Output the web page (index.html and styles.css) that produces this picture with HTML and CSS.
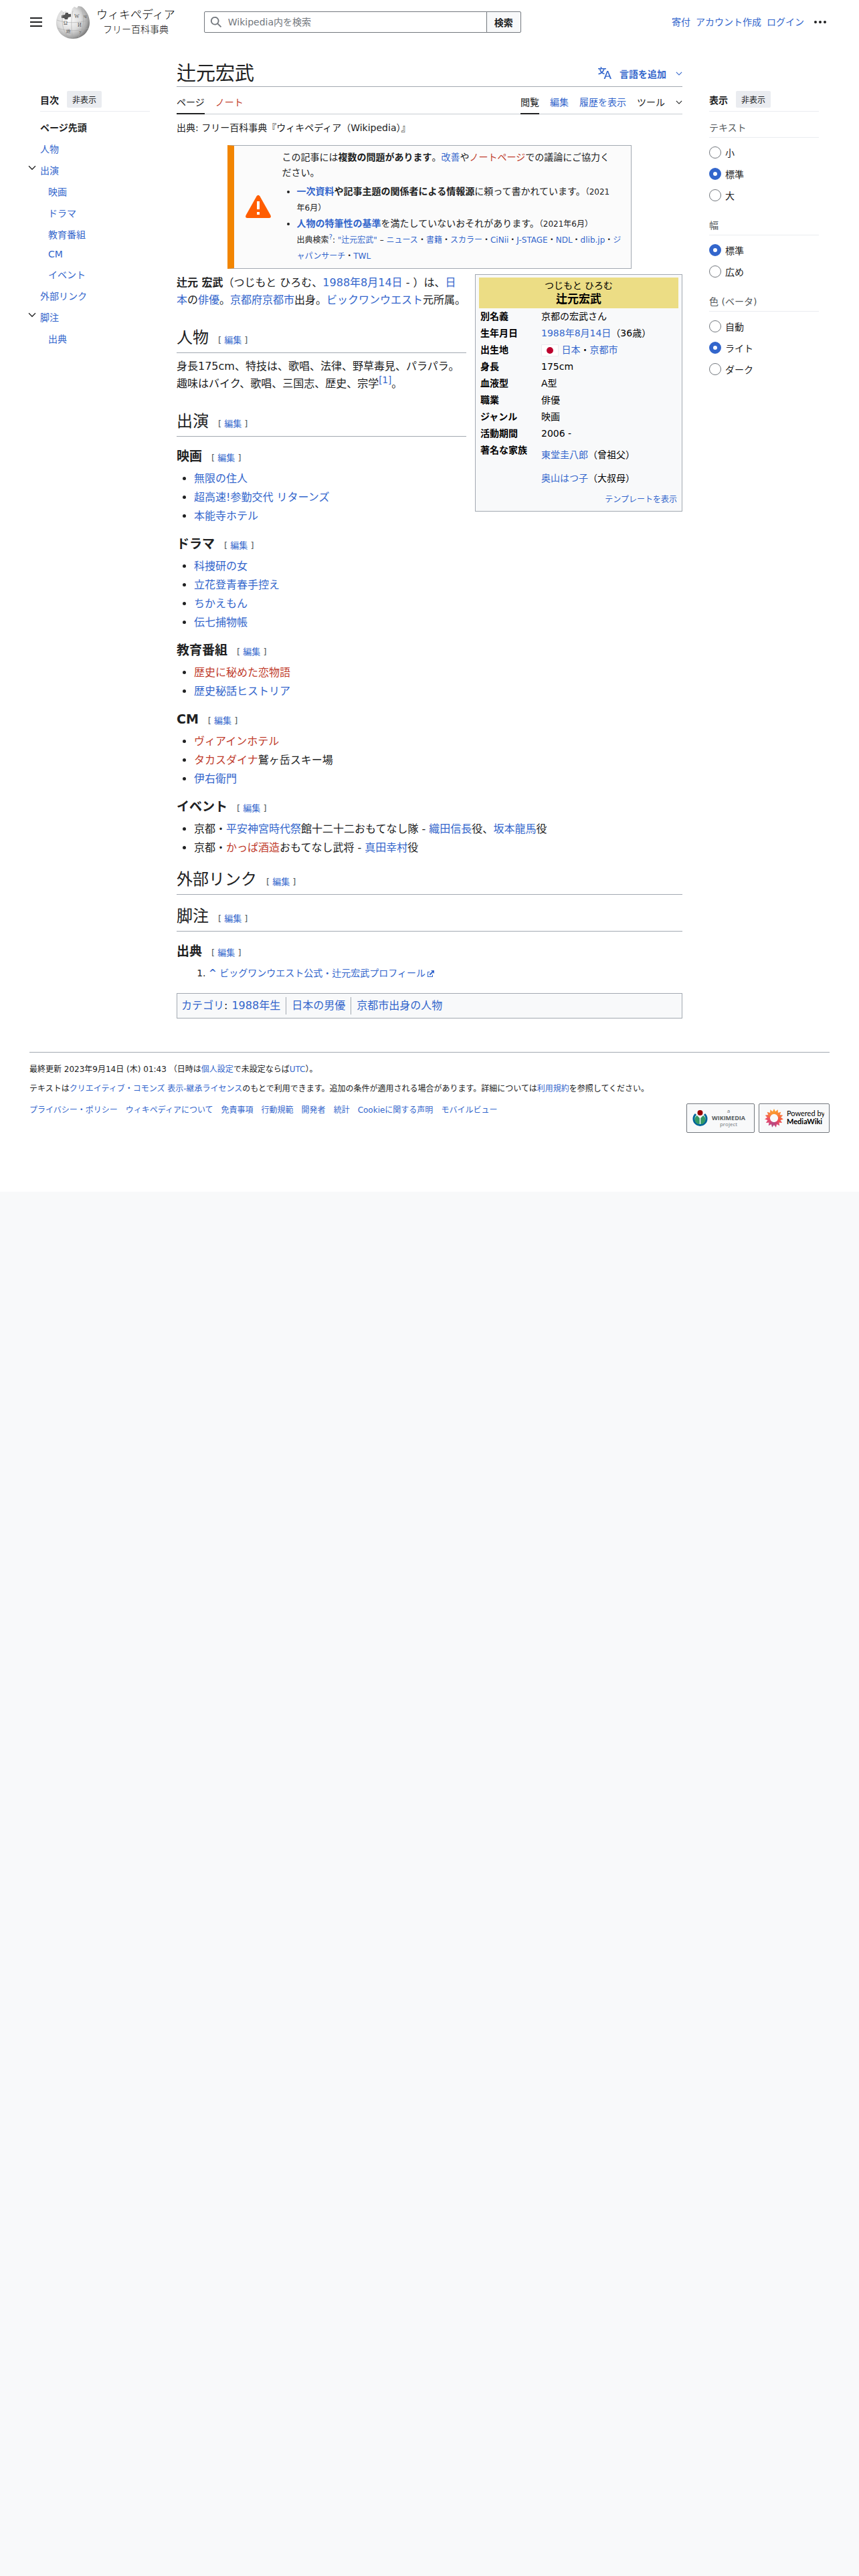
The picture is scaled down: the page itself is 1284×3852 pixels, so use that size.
FILE: index.html
```
<!DOCTYPE html>
<html lang="ja">
<head>
  <meta charset="UTF-8">
  <meta name="viewport" content="width=device-width, initial-scale=1">
  <title>辻元宏武 - Wikipedia</title>
  <link rel="stylesheet" href="styles.css">
</head>
<body>
  <div class="page">
    <header class="header">
      <button type="button" class="menu-button" aria-label="メインメニュー">
        <svg width="20" height="20" viewBox="0 0 20 20"><path d="M1 3h18v2H1zM1 9h18v2H1zM1 15h18v2H1z" fill="#202122"/></svg>
      </button>
      <a href="#" class="logo">
        <svg class="globe" width="50" height="50" viewBox="0 0 50 50">
          <defs>
            <radialGradient id="ball" cx="0.38" cy="0.4" r="0.65">
              <stop offset="0" stop-color="#fff"/>
              <stop offset="0.55" stop-color="#dcdcdc"/>
              <stop offset="0.85" stop-color="#a8a8a8"/>
              <stop offset="1" stop-color="#777"/>
            </radialGradient>
          </defs>
          <path d="M8 7C3 12 0 19 0 26c0 13 11 24 25 24s25-11 25-24C50 16 45 7 38 2l-5-1-2 3-4-2-3 3-2 6-5 2-2-5-4 2z" fill="url(#ball)"/>
          <path d="M8 15l5-1 1-3 4 0v2l4 0 0 4-4 1-1 3-4 0-1-2-4 0z" fill="#555"/>
          <g fill="none" stroke="#aaa" stroke-width="0.6">
            <path d="M25 8c-3 14-3 28 0 42M11 10c-4 12-2 26 6 37M38 5c5 14 3 30-5 43"/>
            <path d="M1 22c14 5 32 5 48 0M2 34c14 5 32 5 46 0"/>
          </g>
          <g fill="#555" font-size="8" font-family="Liberation Serif, serif">
            <text x="27" y="19">W</text><text x="11" y="29">Ω</text><text x="32" y="32">И</text>
            <text x="41" y="19" font-size="7">Ч</text><text x="15" y="41" font-size="7">維</text>
            <text x="34" y="43" font-size="7">7</text>
          </g>
        </svg>
        <span class="wordmark">
          <span class="wordmark-name">ウィキペディア</span>
          <span class="wordmark-tagline">フリー百科事典</span>
        </span>
      </a>
      <form class="search">
        <svg width="18" height="18" viewBox="0 0 20 20"><path d="M12.2 13.6a7 7 0 1 1 1.4-1.4l5.4 5.4-1.4 1.4zM3 8a5 5 0 1 0 10 0A5 5 0 0 0 3 8" fill="#72777d"/></svg>
        <input type="search" class="search-input" placeholder="Wikipedia内を検索" aria-label="Wikipedia内を検索">
        <button type="submit" class="search-button">検索</button>
      </form>
      <nav class="user-links">
        <a href="#">寄付</a>
        <a href="#">アカウント作成</a>
        <a href="#">ログイン</a>
        <button type="button" class="more-button" aria-label="個人用ツール">
          <svg width="20" height="20" viewBox="0 0 20 20" fill="#202122"><circle cx="3" cy="10" r="2"/><circle cx="10" cy="10" r="2"/><circle cx="17" cy="10" r="2"/></svg>
        </button>
      </nav>
    </header>

    <div class="columns">
      <nav class="toc side">
        <div class="side-header">
          <h2>目次</h2>
          <button type="button">非表示</button>
        </div>
        <ul>
          <li><a href="#" class="toc-top">ページ先頭</a></li>
          <li><a href="#">人物</a></li>
          <li class="toc-parent">
            <svg class="toc-arrow" width="12" height="12" viewBox="0 0 20 20"><path d="m17.5 4.75-7.5 7.5-7.5-7.5L1 6.25l9 9 9-9z" fill="#202122"/></svg>
            <a href="#">出演</a>
            <ul>
              <li><a href="#">映画</a></li>
              <li><a href="#">ドラマ</a></li>
              <li><a href="#">教育番組</a></li>
              <li><a href="#">CM</a></li>
              <li><a href="#">イベント</a></li>
            </ul>
          </li>
          <li><a href="#">外部リンク</a></li>
          <li class="toc-parent">
            <svg class="toc-arrow" width="12" height="12" viewBox="0 0 20 20"><path d="m17.5 4.75-7.5 7.5-7.5-7.5L1 6.25l9 9 9-9z" fill="#202122"/></svg>
            <a href="#">脚注</a>
            <ul>
              <li><a href="#">出典</a></li>
            </ul>
          </li>
        </ul>
      </nav>

      <main class="content">
        <div class="title-bar">
          <h1>辻元宏武</h1>
          <button type="button" class="lang-button">
            <svg width="20" height="20" viewBox="0 0 20 20" fill="#36c"><path d="M20 18h-1.4a1 1 0 0 1-.6-.2.9.9 0 0 1-.3-.5l-.9-2.5h-5l-.9 2.5a1 1 0 0 1-.3.4 1 1 0 0 1-.6.3H8.6l4.700-12h1.900zm-3.600-4.500L14.700 8.900a11 11 0 0 1-.4-1.300l-.2.700-.2.600-1.700 4.600zM5 0l.6 2H12v1.500H9.600C9 5.600 8 7.200 6.800 8.400c.8.600 1.800 1 3 1.400l-.6 1.500c-1.500-.5-2.700-1.100-3.700-1.900C4.300 10.300 2.700 11 .8 11.500L.2 10c1.700-.4 3-.9 4.100-1.700C3.200 7.200 2.500 5.700 2 3.500H0V2h4.200l-.8-2zm-1.400 3.500C4 5.200 4.700 6.400 5.600 7.300 6.700 6.300 7.500 5 8 3.500z"/></svg>
            <span>言語を追加</span>
            <svg width="10" height="10" viewBox="0 0 20 20"><path d="m17.5 4.75-7.5 7.5-7.5-7.5L1 6.25l9 9 9-9z" fill="#36c"/></svg>
          </button>
        </div>
        <div class="toolbar">
          <nav class="tabs">
            <a href="#" class="selected">ページ</a>
            <a href="#" class="new">ノート</a>
          </nav>
          <nav class="tabs">
            <a href="#" class="selected">閲覧</a>
            <a href="#">編集</a>
            <a href="#">履歴を表示</a>
            <button type="button" class="tools-button">ツール
              <svg width="10" height="10" viewBox="0 0 20 20"><path d="m17.5 4.75-7.5 7.5-7.5-7.5L1 6.25l9 9 9-9z" fill="#202122"/></svg>
            </button>
          </nav>
        </div>
        <div class="site-sub">出典: フリー百科事典『ウィキペディア（Wikipedia）』</div>

        <div class="ambox">
          <svg class="ambox-icon" width="40" height="40" viewBox="0 0 40 40">
            <path d="M17.5 4.500Q20 1 22.500 4.500L38.500 33Q40 37 36 37H4Q0 37 1.500 33z" fill="#ff5d00"/>
            <path d="M18 12h4v12h-4zM18 28h4v4h-4z" fill="#fff"/>
          </svg>
          <div class="ambox-text">
            <p>この記事には<b>複数の問題があります</b>。<a href="#">改善</a>や<a href="#" class="new">ノートページ</a>での議論にご協力く<br>ださい。</p>
            <ul>
              <li><b><a href="#">一次資料</a>や記事主題の関係者による情報源</b>に頼って書かれています。<small>（2021<br>年6月）</small></li>
              <li><b><a href="#">人物の特筆性の基準</a></b>を満たしていないおそれがあります。<small>（2021年6月）</small><br>
                <small>出典検索<sup><a href="#">?</a></sup>: <a href="#">"辻元宏武"</a> – <a href="#">ニュース</a>・<a href="#">書籍</a>・<a href="#">スカラー</a>・<a href="#">CiNii</a>・<a href="#">J-STAGE</a>・<a href="#">NDL</a>・<a href="#">dlib.jp</a>・<a href="#">ジ<br>ャパンサーチ</a>・<a href="#">TWL</a></small></li>
            </ul>
          </div>
        </div>

        <table class="infobox">
          <tr><th colspan="2" class="infobox-title">つじもと ひろむ<br><span class="infobox-name">辻元宏武</span></th></tr>
          <tr><th>別名義</th><td>京都の宏武さん</td></tr>
          <tr><th>生年月日</th><td><a href="#">1988年8月14日</a>（36歳）</td></tr>
          <tr><th>出生地</th><td><svg class="flag" width="26" height="18" viewBox="0 0 26 18"><path d="M.5.5h25v17H.5z" fill="#fff" stroke="#eaecf0"/><circle cx="13" cy="9" r="5" fill="#bc002d"/></svg> <a href="#">日本</a>・<a href="#">京都市</a></td></tr>
          <tr><th>身長</th><td>175cm</td></tr>
          <tr><th>血液型</th><td>A型</td></tr>
          <tr><th>職業</th><td>俳優</td></tr>
          <tr><th>ジャンル</th><td>映画</td></tr>
          <tr><th>活動期間</th><td>2006 -</td></tr>
          <tr><th>著名な家族</th><td class="family"><p><a href="#">東堂圭八郎</a>（曾祖父）</p><p><a href="#">奥山はつ子</a>（大叔母）</p></td></tr>
          <tr><td colspan="2" class="infobox-footer"><a href="#">テンプレートを表示</a></td></tr>
        </table>

        <p><b>辻元 宏武</b>（つじもと ひろむ、<a href="#">1988年8月14日</a> - ）は、<a href="#">日本</a>の<a href="#">俳優</a>。<a href="#">京都府京都市</a>出身。<a href="#">ビックワンウエスト</a>元所属。</p>

        <div class="heading heading2"><h2>人物</h2><span class="edit">[ <a href="#">編集</a> ]</span></div>
        <p>身長175cm、特技は、歌唱、法律、野草毒見、パラパラ。<br>趣味はバイク、歌唱、三国志、歴史、宗学<sup><a href="#">[1]</a></sup>。</p>

        <div class="heading heading2"><h2>出演</h2><span class="edit">[ <a href="#">編集</a> ]</span></div>
        <div class="heading heading3"><h3>映画</h3><span class="edit">[ <a href="#">編集</a> ]</span></div>
        <ul class="list">
          <li><a href="#">無限の住人</a></li>
          <li><a href="#">超高速!参勤交代 リターンズ</a></li>
          <li><a href="#">本能寺ホテル</a></li>
        </ul>
        <div class="heading heading3"><h3>ドラマ</h3><span class="edit">[ <a href="#">編集</a> ]</span></div>
        <ul class="list">
          <li><a href="#">科捜研の女</a></li>
          <li><a href="#">立花登青春手控え</a></li>
          <li><a href="#">ちかえもん</a></li>
          <li><a href="#">伝七捕物帳</a></li>
        </ul>
        <div class="heading heading3"><h3>教育番組</h3><span class="edit">[ <a href="#">編集</a> ]</span></div>
        <ul class="list">
          <li><a href="#" class="new">歴史に秘めた恋物語</a></li>
          <li><a href="#">歴史秘話ヒストリア</a></li>
        </ul>
        <div class="heading heading3"><h3>CM</h3><span class="edit">[ <a href="#">編集</a> ]</span></div>
        <ul class="list">
          <li><a href="#" class="new">ヴィアインホテル</a></li>
          <li><a href="#" class="new">タカスダイナ</a>鷲ヶ岳スキー場</li>
          <li><a href="#">伊右衛門</a></li>
        </ul>
        <div class="heading heading3"><h3>イベント</h3><span class="edit">[ <a href="#">編集</a> ]</span></div>
        <ul class="list">
          <li>京都・<a href="#">平安神宮時代祭</a>館十二十二おもてなし隊 - <a href="#">織田信長</a>役、<a href="#">坂本龍馬</a>役</li>
          <li>京都・<a href="#" class="new">かっぱ酒造</a>おもてなし武将 - <a href="#">真田幸村</a>役</li>
        </ul>

        <div class="heading heading2"><h2>外部リンク</h2><span class="edit">[ <a href="#">編集</a> ]</span></div>
        <div class="heading heading2"><h2>脚注</h2><span class="edit">[ <a href="#">編集</a> ]</span></div>
        <div class="heading heading3"><h3>出典</h3><span class="edit">[ <a href="#">編集</a> ]</span></div>
        <ol class="references">
          <li><b><a href="#">^</a></b> <a href="#">ビッグワンウエスト公式・辻元宏武プロフィール<svg class="external" width="12" height="12" viewBox="0 0 12 12"><path d="M6 1h5v5L9.2 4.200 5 8.400 3.600 7l4.200-4.200zM2 3h2.500v1H2v6h6V7.500h1V11H1V3z" fill="#36c"/></svg></a></li>
        </ol>

        <div class="categories">
          <span><a href="#">カテゴリ</a>:</span>
          <ul>
            <li><a href="#">1988年生</a></li>
            <li><a href="#">日本の男優</a></li>
            <li><a href="#">京都市出身の人物</a></li>
          </ul>
        </div>
      </main>

      <aside class="appearance side">
        <div class="side-header">
          <h2>表示</h2>
          <button type="button">非表示</button>
        </div>
        <fieldset>
          <legend>テキスト</legend>
          <label><input type="radio" name="text">小</label>
          <label><input type="radio" name="text" checked>標準</label>
          <label><input type="radio" name="text">大</label>
        </fieldset>
        <fieldset>
          <legend>幅</legend>
          <label><input type="radio" name="width" checked>標準</label>
          <label><input type="radio" name="width">広め</label>
        </fieldset>
        <fieldset>
          <legend>色 (ベータ)</legend>
          <label><input type="radio" name="color">自動</label>
          <label><input type="radio" name="color" checked>ライト</label>
          <label><input type="radio" name="color">ダーク</label>
        </fieldset>
      </aside>
    </div>

    <footer class="footer">
      <p>最終更新 2023年9月14日 (木) 01:43 （日時は<a href="#">個人設定</a>で未設定ならば<a href="#">UTC</a>）。</p>
      <p>テキストは<a href="#">クリエイティブ・コモンズ 表示-継承ライセンス</a>のもとで利用できます。追加の条件が適用される場合があります。詳細については<a href="#">利用規約</a>を参照してください。</p>
      <div class="footer-bottom">
        <ul class="footer-links">
          <li><a href="#">プライバシー・ポリシー</a></li>
          <li><a href="#">ウィキペディアについて</a></li>
          <li><a href="#">免責事項</a></li>
          <li><a href="#">行動規範</a></li>
          <li><a href="#">開発者</a></li>
          <li><a href="#">統計</a></li>
          <li><a href="#">Cookieに関する声明</a></li>
          <li><a href="#">モバイルビュー</a></li>
        </ul>
        <div class="badges">
          <a href="#" class="badge">
            <svg width="86" height="32" viewBox="0 0 86 32">
              <path d="M6 10a9.500 9.500 0 1 0 13 0" fill="none" stroke="#069" stroke-width="3"/>
              <path d="M8 12a7 7 0 0 0 3.800 13V16zM17 12a7 7 0 0 1-3.800 13V16z" fill="#396"/>
              <circle cx="12.500" cy="8" r="4" fill="#900"/>
              <g font-family="Open Sans, sans-serif" text-anchor="middle" fill="#72777d">
                <text x="55" y="8" font-size="8">a</text>
                <text x="55" y="19" font-size="9" font-weight="700" fill="#54595d">WIKIMEDIA</text>
                <text x="55" y="28" font-size="8">project</text>
              </g>
            </svg>
          </a>
          <a href="#" class="badge">
            <svg width="90" height="32" viewBox="0 0 90 32">
              <defs><path id="petal" d="M-3 -8L0 -14L3 -8L2 -6H-2z"/></defs>
              <g transform="translate(15 16)">
                <use href="#petal" fill="#f99d32"/>
                <use href="#petal" fill="#fa9132" transform="rotate(24)"/>
                <use href="#petal" fill="#fb8537" transform="rotate(48)"/>
                <use href="#petal" fill="#f9743c" transform="rotate(72)"/>
                <use href="#petal" fill="#f5623f" transform="rotate(96)"/>
                <use href="#petal" fill="#ef5350" transform="rotate(120)"/>
                <use href="#petal" fill="#e0486a" transform="rotate(144)"/>
                <use href="#petal" fill="#c94578" transform="rotate(168)"/>
                <use href="#petal" fill="#b44a80" transform="rotate(192)"/>
                <use href="#petal" fill="#c4487c" transform="rotate(216)"/>
                <use href="#petal" fill="#dd4770" transform="rotate(240)"/>
                <use href="#petal" fill="#ea5065" transform="rotate(264)"/>
                <use href="#petal" fill="#f16250" transform="rotate(288)"/>
                <use href="#petal" fill="#f67c40" transform="rotate(312)"/>
                <use href="#petal" fill="#fa9436" transform="rotate(336)"/>
              </g>
              <g font-family="Lato, sans-serif" fill="#000">
                <text x="34" y="13" font-size="11">Powered by</text>
                <text x="34" y="25" font-size="11" font-weight="700">MediaWiki</text>
              </g>
            </svg>
          </a>
        </div>
      </div>
    </footer>
  </div>
</body>
</html>
```
FILE: styles.css
```
* {
  margin: 0;
  padding: 0;
  box-sizing: border-box;
}

body {
  background-color: #f8f9fa;
  color: #202122;
  font-family: "DejaVu Sans", "Noto Sans CJK JP", sans-serif;
  font-size: 16px;
  line-height: 26px;
}

a {
  color: #36c;
  text-decoration: none;
}

a.new {
  color: #bf3c2c;
}

ul {
  list-style: none;
}

button {
  border: none;
  background: none;
  color: inherit;
  font-family: inherit;
  font-size: 14px;
  cursor: pointer;
}

sup {
  line-height: 1;
}

.page {
  background-color: #fff;
  padding: 0 44px 88px;
}

/* Header */
.header {
  display: flex;
  align-items: center;
  height: 66px;
}

.menu-button {
  display: flex;
  width: 20px;
  height: 20px;
}

.logo {
  display: flex;
  align-items: center;
  gap: 10px;
  margin-left: 20px;
  color: #000;
}

.wordmark {
  display: flex;
  flex-direction: column;
  align-items: center;
  font-weight: 300;
  line-height: 22px;
}

.wordmark-name {
  font-size: 17px;
}

.wordmark-tagline {
  font-size: 14px;
}

.search {
  display: flex;
  align-items: center;
  position: relative;
  flex: 0 1 474px;
  margin-left: 43px;
}

.search svg {
  position: absolute;
  left: 9px;
}

.search-input {
  flex: 1;
  height: 32px;
  min-width: 0;
  padding: 0 8px 0 35px;
  border: 1px solid #72777d;
  border-radius: 2px 0 0 2px;
  font-family: inherit;
  font-size: 14px;
}

.search-input::placeholder {
  color: #72777d;
}

.search-button {
  height: 32px;
  margin-left: -1px;
  padding: 0 11px;
  border: 1px solid #72777d;
  border-radius: 0 2px 2px 0;
  background-color: #f8f9fa;
  font-weight: bold;
}

.user-links {
  display: flex;
  align-items: center;
  gap: 8px;
  margin-left: auto;
  padding-right: 4px;
  font-size: 14px;
}

.more-button {
  display: flex;
  margin-left: 6px;
}

/* Three columns */
.columns {
  display: grid;
  grid-template-columns: 180px minmax(0, 1fr) 180px;
  gap: 40px;
  padding-top: 24px;
}

.side {
  padding-top: 46px;
  font-size: 14px;
  line-height: normal;
}

.side-header {
  display: flex;
  align-items: center;
  gap: 12px;
  padding-bottom: 5px;
  border-bottom: 1px solid #eaecf0;
}

.side-header h2 {
  font-size: 14px;
}

.side-header button {
  height: 25px;
  padding: 0 8px;
  border-radius: 2px;
  background-color: #eaecf0;
  font-size: 12px;
}

.toc {
  padding-left: 16px;
}

.toc > ul {
  padding-top: 7px;
}

.toc a {
  display: block;
  padding: 6px 0;
}

.toc .toc-top {
  color: #202122;
  font-weight: bold;
}

.toc li ul {
  padding-left: 12px;
}

.toc-parent {
  position: relative;
}

.toc-arrow {
  position: absolute;
  top: 7px;
  left: -18px;
}

.appearance {
  padding-right: 16px;
}

.appearance fieldset {
  border: none;
  padding-bottom: 5px;
}

.appearance legend {
  width: 100%;
  margin-bottom: 6px;
  padding: 13px 0 5px;
  border-bottom: 1px solid #eaecf0;
  color: #54595d;
}

.appearance label {
  display: flex;
  align-items: center;
  gap: 6px;
  height: 32px;
}

.appearance input {
  appearance: none;
  width: 18px;
  height: 18px;
  border: 1px solid #72777d;
  border-radius: 50%;
  background-color: #fff;
}

.appearance input:checked {
  border: 6px solid #36c;
}

/* Title and tabs */
.title-bar {
  display: flex;
  align-items: center;
  justify-content: space-between;
  height: 40px;
  border-bottom: 1px solid #a2a9b1;
}

h1 {
  font-size: 29px;
  font-weight: normal;
  line-height: 36px;
}

.lang-button {
  display: flex;
  align-items: center;
  color: #36c;
  font-weight: bold;
}

.lang-button span {
  margin: 0 14px 0 12px;
}

.toolbar {
  display: flex;
  justify-content: space-between;
  height: 41px;
  border-bottom: 1px solid #c8ccd1;
}

.tabs {
  display: flex;
  gap: 16px;
  font-size: 14px;
}

.tabs a,
.tabs button {
  height: 41px;
  padding-top: 10px;
  line-height: 26px;
}

.tabs .selected {
  border-bottom: 2px solid #202122;
  color: #202122;
}

.tools-button {
  display: flex;
  align-items: center;
  gap: 16px;
  padding-bottom: 6px;
}

.site-sub {
  padding-top: 9px;
  font-size: 14px;
  line-height: 22px;
}

/* Notice box */
.ambox {
  display: flex;
  align-items: center;
  width: 80%;
  margin: 15px auto 8px;
  padding: 6px 12px 7px 16px;
  border: 1px solid #a2a9b1;
  border-left: 10px solid #f28500;
  background-color: #fbfbfb;
  font-size: 14px;
  line-height: 23px;
}

.ambox-icon {
  flex: none;
  margin-right: 16px;
}

.ambox ul {
  list-style: disc;
  padding: 4px 0 0 22px;
  line-height: 24px;
}

.content .ambox p {
  padding: 0;
}

small {
  font-size: 12px;
  line-height: 1;
}

/* Infobox */
.infobox {
  float: right;
  width: 310px;
  margin: 0 0 14px 13px;
  padding: 4px 5px 4px;
  border: 1px solid #a2a9b1;
  border-spacing: 0;
  background-color: #f8f9fa;
  color: #000;
  font-size: 14px;
  line-height: 21px;
}

.infobox th,
.infobox td {
  padding: 2px;
  text-align: left;
  vertical-align: top;
}

.infobox th {
  width: 91px;
}

.infobox .infobox-title {
  background-color: #ecdd85;
  font-weight: normal;
  text-align: center;
}

.infobox-name {
  font-size: 17px;
  font-weight: bold;
  line-height: 1;
}

.flag {
  vertical-align: middle;
}

.infobox .family p {
  padding: 7px 0;
}

.infobox .infobox-footer {
  font-size: 12px;
  text-align: right;
}

/* Article */
.content p {
  padding-bottom: 10px;
}

.heading {
  display: flex;
  align-items: baseline;
}

.heading2 {
  margin: 16px 0 7px;
  padding-bottom: 4px;
  border-bottom: 1px solid #a2a9b1;
}

.heading2 + .heading2 {
  margin-top: 15px;
}

.heading2 h2 {
  font-size: 24px;
  font-weight: normal;
  line-height: 35px;
}

.heading3 {
  margin: 12px 0 5px;
}

.heading2 + .heading3 {
  margin-top: 14px;
}

.heading3 h3 {
  font-size: 19px;
  line-height: 30px;
}

.edit {
  margin-left: 14px;
  color: #54595d;
  font-size: 13px;
  line-height: 20px;
}

.list {
  list-style: disc;
  padding-left: 26px;
  line-height: 28px;
}

.references {
  padding-left: 48px;
  font-size: 14px;
}

.external {
  margin-left: 2px;
  vertical-align: middle;
}

.categories {
  display: flex;
  gap: 6px;
  margin-top: 17px;
  padding: 5px 6px;
  border: 1px solid #a2a9b1;
  background-color: #f8f9fa;
}

.categories ul {
  display: flex;
}

.categories li {
  padding: 0 8px;
  border-left: 1px solid #a2a9b1;
}

.categories li:first-child {
  padding-left: 0;
  border-left: none;
}

/* Footer */
.footer {
  margin-top: 50px;
  padding-top: 15px;
  border-top: 1px solid #a2a9b1;
  font-size: 12px;
  line-height: 21px;
}

.footer p {
  padding-bottom: 8px;
}

.footer-bottom {
  display: flex;
  align-items: flex-start;
  justify-content: space-between;
  padding-top: 3px;
}

.footer-links {
  display: flex;
  flex-wrap: wrap;
  gap: 0 12px;
}

.badges {
  display: flex;
  gap: 6px;
}

.badge {
  display: flex;
  align-items: center;
  height: 44px;
  padding: 0 7px;
  border: 1px solid #72777d;
  border-radius: 2px;
  background-color: #f8f9fa;
}
```
